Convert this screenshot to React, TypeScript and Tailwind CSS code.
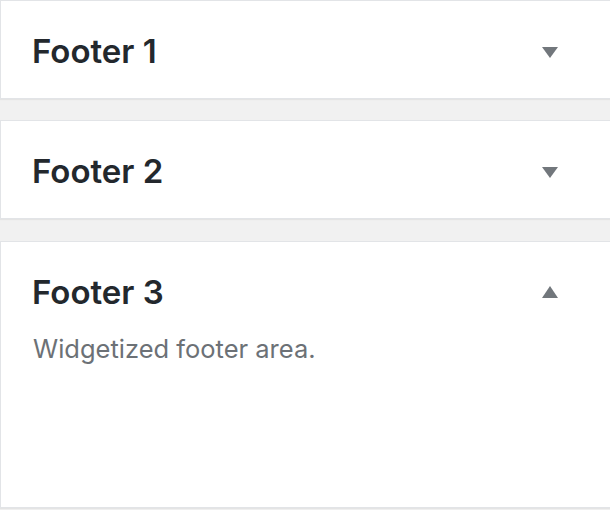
import React from "react";

function Down() {
  return (
    <svg width="16" height="11" viewBox="0 0 16 11" className="block">
      <path d="M0 0 H16 L8 11 Z" fill="#72777c" />
    </svg>
  );
}
function Up() {
  return (
    <svg width="16" height="12" viewBox="0 0 16 12" className="block">
      <path d="M0 12 H16 L8 0 Z" fill="#72777c" />
    </svg>
  );
}

function Panel({ title, open }: { title: string; open?: boolean }) {
  return (
    <div
      className={`w-[640px] bg-white border border-[#e2e4e7] shadow-[0_1px_1px_rgba(0,0,0,0.05)] ${
        open ? "h-[267px] mt-[1px]" : "h-[99px]"
      }`}
    >
      <div className="h-[98px] pt-[4px] flex items-center pl-[31px]">
        <div className="w-[510px] text-[33px] font-semibold text-[#23282d]">{title}</div>
        <div className={open ? "-mt-[2px]" : ""}>{open ? <Up /> : <Down />}</div>
      </div>
      {open && (
        <div className="-mt-[10px] pl-[32px] text-[25.5px] text-[#6c7176]">Widgetized footer area.</div>
      )}
    </div>
  );
}

export default function App() {
  return (
    <div
      className="w-[610px] h-[510px] overflow-hidden bg-[#f1f1f1] flex flex-col gap-[21px]"
      style={{ fontFamily: "Inter, 'Noto Sans', sans-serif" }}
    >
      <Panel title="Footer 1" />
      <Panel title="Footer 2" />
      <Panel title="Footer 3" open />
    </div>
  );
}
